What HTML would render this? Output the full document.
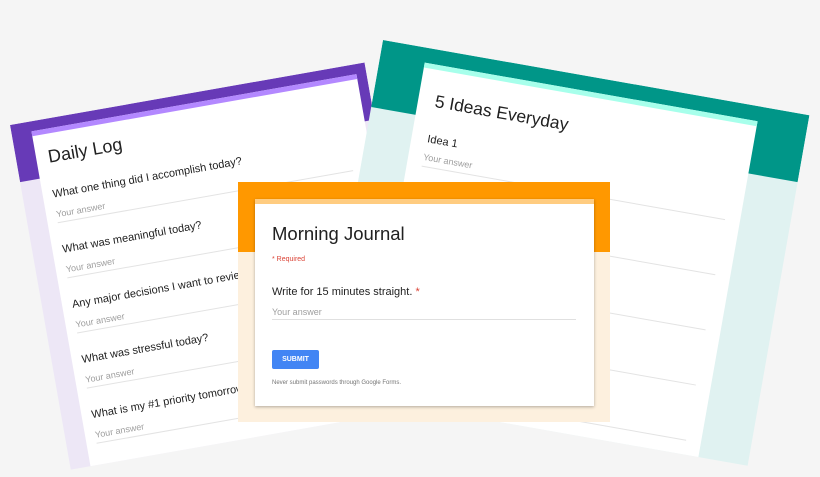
<!DOCTYPE html>
<html><head><meta charset="utf-8"><style>
*{margin:0;padding:0;box-sizing:border-box}
body{width:820px;height:477px;background:#f5f5f5;position:relative;overflow:hidden;font-family:"Liberation Sans",sans-serif;color:#212121}
.abs{position:absolute}
.q{position:absolute;font-size:11px;white-space:nowrap}
.a{position:absolute;font-size:9px;color:#9e9e9e;white-space:nowrap}
.l{position:absolute;height:1px;background:#e3e3e3}
</style></head><body>

<!-- Daily Log -->
<div class="abs" style="left:10px;top:125px;width:360px;height:350px;transform:rotate(-10deg);transform-origin:0 0;background:#ede7f6;overflow:hidden">
  <div class="abs" style="left:0;top:0;width:360px;height:58px;background:#673ab7"></div>
  <div class="abs" style="left:20px;top:10px;width:330px;height:345px;background:#fff;border-top:5px solid #b388ff"></div>
  <div class="abs" style="left:32px;top:28px;font-size:18px">Daily Log</div>
  <div class="q" style="left:30px;top:70px">What one thing did I accomplish today?</div>
  <div class="a" style="left:30px;top:91px">Your answer</div><div class="l" style="left:30px;top:104px;width:300px"></div>
  <div class="q" style="left:30px;top:126px">What was meaningful today?</div>
  <div class="a" style="left:30px;top:147px">Your answer</div><div class="l" style="left:30px;top:160px;width:300px"></div>
  <div class="q" style="left:30px;top:182px">Any major decisions I want to review?</div>
  <div class="a" style="left:30px;top:203px">Your answer</div><div class="l" style="left:30px;top:216px;width:300px"></div>
  <div class="q" style="left:30px;top:238px">What was stressful today?</div>
  <div class="a" style="left:30px;top:259px">Your answer</div><div class="l" style="left:30px;top:272px;width:300px"></div>
  <div class="q" style="left:30px;top:294px">What is my #1 priority tomorrow?</div>
  <div class="a" style="left:30px;top:315px">Your answer</div><div class="l" style="left:30px;top:328px;width:300px"></div>
</div>

<!-- 5 Ideas -->
<div class="abs" style="left:383px;top:40px;width:433px;height:356px;transform:rotate(10deg);transform-origin:0 0;background:#e0f2f1;overflow:hidden">
  <div class="abs" style="left:0;top:0;width:433px;height:68px;background:#009688"></div>
  <div class="abs" style="left:45px;top:15px;width:338px;height:345px;background:#fff;border-top:5px solid #a7ffeb"></div>
  <div class="abs" style="left:62px;top:41px;font-size:17.5px">5 Ideas Everyday</div>
  <div class="q" style="left:61px;top:84px;font-size:11px">Idea 1</div>
  <div class="a" style="left:60px;top:103px">Your answer</div><div class="l" style="left:60px;top:117px;width:308px"></div>
  <div class="l" style="left:60px;top:173px;width:308px"></div>
  <div class="l" style="left:60px;top:229px;width:308px"></div>
  <div class="l" style="left:60px;top:285px;width:308px"></div>
  <div class="l" style="left:60px;top:341px;width:308px"></div>
</div>

<!-- Morning Journal -->
<div class="abs" style="left:238px;top:182px;width:372px;height:240px;background:#fdf0de">
  <div class="abs" style="left:0;top:0;width:372px;height:70px;background:#ff9800"></div>
  <div class="abs" style="left:17px;top:17px;width:339px;height:207px;background:#fff;border-top:5px solid #ffcc80;box-shadow:0 1px 3px rgba(0,0,0,.3)"></div>
  <div class="abs" style="left:34px;top:41px;font-size:18.5px;color:#212121">Morning Journal</div>
  <div class="abs" style="left:34px;top:74px;font-size:7px;color:#db4437">* Required</div>
  <div class="abs" style="left:34px;top:104px;font-size:11px">Write for 15 minutes straight. <span style="color:#db4437">*</span></div>
  <div class="abs" style="left:34px;top:125px;font-size:9px;color:#9e9e9e">Your answer</div>
  <div class="l" style="left:34px;top:137px;width:304px;background:#e0e0e0"></div>
  <div class="abs" style="left:34px;top:168px;width:47px;height:19px;background:#4285f4;border-radius:2px;color:#fff;font-size:7px;font-weight:bold;text-align:center;line-height:19px">SUBMIT</div>
  <div class="abs" style="left:34px;top:198px;font-size:6px;color:#757575;white-space:nowrap">Never submit passwords through Google Forms.</div>
</div>
</body></html>
